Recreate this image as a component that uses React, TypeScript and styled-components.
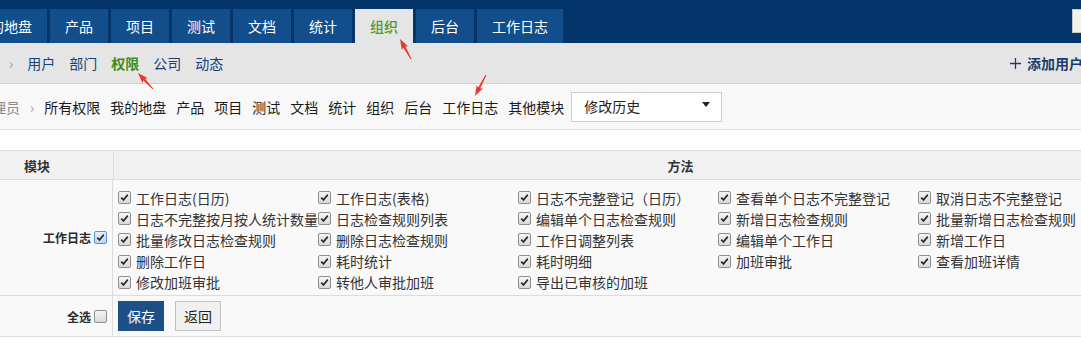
import React from 'react';
import styled, { createGlobalStyle, css } from 'styled-components';

const Global = createGlobalStyle`
  html, body { margin: 0; padding: 0; background: #fff; overflow: hidden; }
  body {
    font-family: "Noto Sans CJK SC", "Liberation Sans", sans-serif;
    font-size: 14px;
    color: #333;
  }
  * { box-sizing: border-box; }
`;

const Viewport = styled.div`
  position: relative;
  width: 1081px;
  height: 344px;
  overflow: hidden;
`;

const Page = styled.div`
  width: 1289px;
  margin-left: -39px;
`;

const Header = styled.header`
  display: flex;
  align-items: flex-end;
  height: 43px;
  background: #03356b;
  padding-right: 28px;
`;

const Tabs = styled.nav`
  display: flex;
  gap: 3px;
`;

const Tab = styled.a<{ $active?: boolean }>`
  display: flex;
  align-items: center;
  justify-content: center;
  height: 34px;
  padding: 0 15px;
  background: #124e8c;
  color: #fff;
  font-size: 14px;
  line-height: 20px;
  text-decoration: none;
  ${(p) =>
    p.$active &&
    css`
      background: #e5e5e5;
      color: #4f9b2c;
      font-weight: 500;
    `}
`;

const Search = styled.div`
  align-self: flex-start;
  margin: 9px 0 0 auto;
  width: 150px;
  height: 24px;
  background: #f3f3ee;
  border: 1px solid #c9c9c0;
`;

const SubNav = styled.div`
  display: flex;
  align-items: center;
  gap: 14px;
  height: 41px;
  padding: 0 167px 0 48px;
  background: #e5e5e5;
  border-bottom: 1px solid #d0d0d0;
  line-height: 20px;
`;

const Sep = styled.span`
  color: #9a9a9a;
  font-size: 14px;
`;

const SubLink = styled.a<{ $active?: boolean }>`
  color: #17407a;
  font-size: 14px;
  text-decoration: none;
  ${(p) =>
    p.$active &&
    css`
      color: #3f8c1f;
      font-weight: 700;
    `}
`;

const Action = styled.a`
  display: flex;
  align-items: center;
  gap: 6px;
  margin-left: auto;
  color: #1b3d6e;
  font-weight: 700;
  font-size: 14px;
  text-decoration: none;
  white-space: nowrap;
`;

const Toolbar = styled.div`
  display: flex;
  align-items: center;
  gap: 10px;
  height: 46px;
  padding-left: 17px;
  background: #f8f8f9;
  border-bottom: 1px solid #dedede;
  line-height: 20px;
`;

const Crumb = styled.span`
  color: #8a8a8a;
`;

const ModLink = styled.a`
  color: #1a1a1a;
  text-decoration: none;
  white-space: nowrap;
`;

const Select = styled.div`
  display: flex;
  align-items: flex-start;
  justify-content: space-between;
  width: 151px;
  height: 30px;
  margin-left: -3px;
  padding: 3px 11px 0 12px;
  background: #fff;
  border: 1px solid #cfcfcf;
  color: #222;
`;

const Caret = styled.span`
  margin-top: 6px;
  width: 0;
  height: 0;
  border-left: 4px solid transparent;
  border-right: 4px solid transparent;
  border-top: 5px solid #222;
`;

const Table = styled.div`
  width: 1286px;
  margin-top: 20px;
  border-top: 1px solid #dcdcdc;
`;

const Row = styled.div<{ $head?: boolean; $height: number }>`
  display: grid;
  grid-template-columns: 152px 1fr;
  height: ${(p) => p.$height}px;
  border-bottom: 1px solid #dcdcdc;
  background: ${(p) => (p.$head ? '#f1f1f1' : '#f9f9fa')};
`;

const HeadCell = styled.div`
  display: flex;
  align-items: center;
  justify-content: center;
  font-size: 13px;
  font-weight: 700;
  color: #333;
  & + & {
    border-left: 1px solid #dcdcdc;
  }
`;

const LabelCell = styled.div`
  display: flex;
  align-items: center;
  justify-content: flex-end;
  gap: 3px;
  padding-right: 5px;
  border-right: 1px solid #dcdcdc;
`;

const LabelText = styled.span`
  font-size: 12px;
  font-weight: 700;
  color: #2a2a2a;
`;

const MethodGrid = styled.div`
  display: grid;
  grid-template-columns: repeat(5, 200px);
  grid-auto-rows: 21.2px;
  padding: 7px 0 0 5px;
`;

const Method = styled.label`
  display: flex;
  align-items: center;
  gap: 5px;
  white-space: nowrap;
  font-size: 14px;
  line-height: 20px;
  color: #333;
`;

const Box = styled.span<{ $checked?: boolean; $focus?: boolean }>`
  display: inline-flex;
  align-items: center;
  justify-content: center;
  flex-shrink: 0;
  width: 13px;
  height: 13px;
  border: 1px solid #8f8f8f;
  border-radius: 2px;
  background: linear-gradient(#f6f6f6, #d9d9d9);
  ${(p) =>
    p.$focus &&
    css`
      border-color: #5a8fd4;
      background: linear-gradient(#e6f1fd, #b9d6f5);
    `}
`;

const Actions = styled.div`
  display: flex;
  align-items: center;
  gap: 11px;
  padding-left: 5px;
`;

const Button = styled.button<{ $primary?: boolean }>`
  height: 30px;
  padding: 0 8px;
  font-family: inherit;
  font-size: 14px;
  line-height: 20px;
  color: #222;
  background: #f0f0f0;
  border: 1px solid #c2c2c2;
  border-radius: 0;
  ${(p) =>
    p.$primary &&
    css`
      color: #fff;
      background: #1d5089;
      border-color: #1d5089;
    `}
`;

const Overlay = styled.svg`
  position: absolute;
  left: 0;
  top: 0;
  pointer-events: none;
`;

function Check({ checked, focus }: { checked?: boolean; focus?: boolean }) {
  return (
    <Box $checked={checked} $focus={focus}>
      {checked && (
        <svg width="9" height="9" viewBox="0 0 9 9">
          <path d="M1.2 4.6 L3.5 6.9 L7.8 1.6" fill="none" stroke="#2d2d2d" strokeWidth="1.7" />
        </svg>
      )}
    </Box>
  );
}

function arrow(tx: number, ty: number, hx: number, hy: number) {
  const dx = hx - tx;
  const dy = hy - ty;
  const L = Math.hypot(dx, dy);
  const ux = dx / L;
  const uy = dy / L;
  const nx = -uy;
  const ny = ux;
  const headLen = 9;
  const headW = 3.6;
  const s0 = 0.5;
  const s1 = 1.2;
  const bx = hx - ux * headLen;
  const by = hy - uy * headLen;
  const pts = [
    [tx + nx * s0, ty + ny * s0],
    [bx + nx * s1, by + ny * s1],
    [bx + nx * headW - ux * 1.5, by + ny * headW - uy * 1.5],
    [hx, hy],
    [bx - nx * headW - ux * 1.5, by - ny * headW - uy * 1.5],
    [bx - nx * s1, by - ny * s1],
    [tx - nx * s0, ty - ny * s0],
  ];
  return pts.map((p) => p.map((v) => v.toFixed(2)).join(',')).join(' ');
}

const tabs = ['我的地盘', '产品', '项目', '测试', '文档', '统计', '组织', '后台', '工作日志'];
const subs = ['用户', '部门', '权限', '公司', '动态'];
const mods = ['所有权限', '我的地盘', '产品', '项目', '测试', '文档', '统计', '组织', '后台', '工作日志', '其他模块'];
const methods = [
  '工作日志(日历)',
  '工作日志(表格)',
  '日志不完整登记（日历）',
  '查看单个日志不完整登记',
  '取消日志不完整登记',
  '日志不完整按月按人统计数量',
  '日志检查规则列表',
  '编辑单个日志检查规则',
  '新增日志检查规则',
  '批量新增日志检查规则',
  '批量修改日志检查规则',
  '删除日志检查规则',
  '工作日调整列表',
  '编辑单个工作日',
  '新增工作日',
  '删除工作日',
  '耗时统计',
  '耗时明细',
  '加班审批',
  '查看加班详情',
  '修改加班审批',
  '转他人审批加班',
  '导出已审核的加班',
];

export default function App() {
  return (
    <>
      <Global />
      <Viewport>
        <Page>
          <Header>
            <Tabs>
              {tabs.map((t) => (
                <Tab key={t} $active={t === '组织'}>
                  {t}
                </Tab>
              ))}
            </Tabs>
            <Search />
          </Header>
          <SubNav>
            <Sep>›</Sep>
            {subs.map((s) => (
              <SubLink key={s} $active={s === '权限'}>
                {s}
              </SubLink>
            ))}
            <Action>
              <svg width="11" height="11" viewBox="0 0 11 11">
                <path d="M5.5 0 V11 M0 5.5 H11" stroke="#1b3d6e" strokeWidth="1.3" />
              </svg>
              添加用户
            </Action>
          </SubNav>
          <Toolbar>
            <Crumb>管理员</Crumb>
            <Sep>›</Sep>
            {mods.map((m) => (
              <ModLink key={m}>{m}</ModLink>
            ))}
            <Select>
              <span>修改历史</span>
              <Caret />
            </Select>
          </Toolbar>
          <Table>
            <Row $head $height={29}>
              <HeadCell>模块</HeadCell>
              <HeadCell>方法</HeadCell>
            </Row>
            <Row $height={116}>
              <LabelCell>
                <LabelText>工作日志</LabelText>
                <Check checked focus />
              </LabelCell>
              <MethodGrid>
                {methods.map((m) => (
                  <Method key={m}>
                    <Check checked />
                    <span>{m}</span>
                  </Method>
                ))}
              </MethodGrid>
            </Row>
            <Row $height={41}>
              <LabelCell>
                <LabelText>全选</LabelText>
                <Check />
              </LabelCell>
              <Actions>
                <Button $primary>保存</Button>
                <Button>返回</Button>
              </Actions>
            </Row>
          </Table>
        </Page>
        <Overlay width="1081" height="344" viewBox="0 0 1081 344">
          <polygon points={arrow(411, 59, 400, 39)} fill="#e6392e" />
          <polygon points={arrow(153, 89, 138, 73)} fill="#e6392e" />
          <polygon points={arrow(486, 75, 475, 96)} fill="#e6392e" />
        </Overlay>
      </Viewport>
    </>
  );
}
